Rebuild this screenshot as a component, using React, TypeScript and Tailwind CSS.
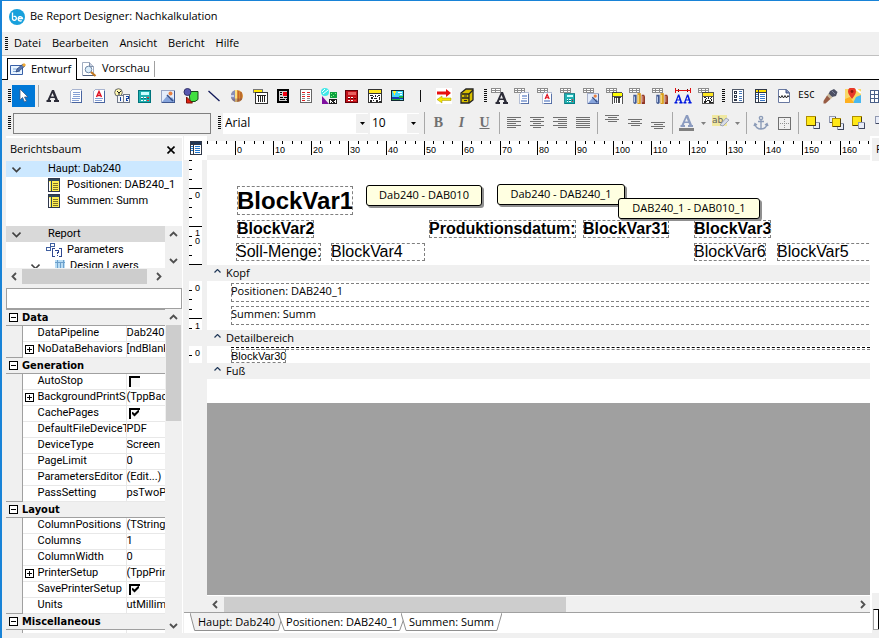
import React, { ReactNode } from "react";

function Icon({ children, w = 16, className = "" }: { children: ReactNode; w?: number; className?: string }) {
  return (
    <svg width={w} height={16} viewBox={`0 0 ${w} 16`} className={`shrink-0 ${className}`} aria-hidden="true">
      {children}
    </svg>
  );
}

const Crisp = ({ children }: { children: ReactNode }) => <g shapeRendering="crispEdges">{children}</g>;

/* ---------- shared icon parts ---------- */
const LetterA = ({ fill = "#2c2c38" }: { fill?: string }) => (
  <path fill={fill} fillRule="evenodd" d="M7 2h2l4 10h1v2H9v-2h1.300l-.700-2H5.500l-.700 2H6v2H1.500v-2h1zM7.500 5 6 8.500h3z" />
);
const Memo = () => (
  <Crisp>
    <path fill="#fff" stroke="#a8b4d0" d="M4.500 1.500h9v13h-11v-11z" />
    <path stroke="#86a0d4" d="M5 4.500h7M5 6.500h7M5 8.500h7M4 10.500h8M4 12.500h7" />
    <path stroke="#4864a0" d="M13.500 3v11.500H4" fill="none" />
  </Crisp>
);
const RichText = () => (
  <>
    <Memo />
    <path fill="#fff" d="M4 2.500h8V10H4z" />
    <path d="m5.500 9 2.500-5.500 2.500 5.500M6.500 7.500h3" stroke="#e01020" strokeWidth="1.400" fill="none" />
  </>
);
const Calc = ({ body = "#20b0b0", edge = "#00747c", lcd = "#c8ffff" }: { body?: string; edge?: string; lcd?: string }) => (
  <Crisp>
    <rect x="1.500" y="2.500" width="12" height="12" fill={body} stroke={edge} />
    <path fill={lcd} d="M4 4h8v3H4z" />
    <path fill="#fff" d="M4 9h2v1H4zM7 9h2v1H7zM4 12h2v1H4zM7 12h2v1H7z" />
    <path fill="#f03030" d="M10 9h2v1h-2zM10 12h2v1h-2z" />
    <path fill={edge} d="M4 10h2v1H4zM7 10h2v1H7zM10 10h2v1h-2z" />
  </Crisp>
);
const Picture = () => (
  <>
    <Crisp>
      <rect x="1.500" y="2.500" width="13" height="12" fill="#e4ecfa" stroke="#98a4c4" />
      <path d="M14.500 3v11.500H2" stroke="#405890" fill="none" />
    </Crisp>
    <path d="m2 14 5-6 3 3 2-2 2 3v2z" fill="#86a4dc" />
    <path d="m7 7 6 6" stroke="#334c86" strokeWidth="1.500" />
    <circle cx="10.500" cy="5.500" r="2" fill="#e88040" />
  </>
);
const Pens = () => (
  <>
    <path d="M1 4h4v9a2 2 0 0 1-4 0z" fill="#405890" />
    <path d="M2 6h1v7H2z" fill="#cfe0ff" />
    <path d="M6 2h4v13H6z" fill="#d89810" />
    <path d="M7 4h1v10H7z" fill="#fff2a0" />
    <path d="M11 4h3l1 2v9h-4z" fill="#8c3020" />
    <path d="M12 5h1v8h-1z" fill="#ffc0a0" />
  </>
);
const Barcode = ({ yellow = true }: { yellow?: boolean }) => (
  <Crisp>
    <rect x="3.500" y="4.500" width="12" height="11" fill="#fff" stroke="#333" />
    {yellow && <path fill="#ff0" stroke="#333" d="M3.500 1.500h12v4h-12z" />}
    <path stroke="#222" d="M6.500 7v7M8.500 7v7M10.500 7v7M12.500 7v7M5 7.500h9" />
  </Crisp>
);
const Qr = () => (
  <Crisp>
    <rect x="1.500" y="1.500" width="13" height="13" fill="#fff" stroke="#333" />
    <path fill="#ffe820" d="M2 2h12v3H2z" />
    <path stroke="#333" d="M2 5.500h12" />
    <path fill="#222" d="M3 7h3v1H3zM8 7h1v2H8zM11 7h2v1h-2zM4 9h2v2H4zM7 10h3v1H7zM12 9h1v3h-1zM3 12h2v2H3zM6 12h1v1H6zM9 12h2v2H9zM6 8h1v1H6zM10 8h1v1h-1zM12 13h2v1h-2z" />
  </Crisp>
);
/* Small grey field grid placed behind the data-aware variants. */
const Db = ({ children }: { children: ReactNode }) => (
  <Icon w={18}>
    <Crisp>
      <path d="M1.500.500h10v4h-10zM1.500 2.500h10M4.500.500v4M8.500.500v4" stroke="#8c8c8c" fill="#fff" />
    </Crisp>
    <g transform="translate(4.500 3.500) scale(.830)">{children}</g>
  </Icon>
);
const ReportTable = ({ accent = "#ffe000", cells = "#3a78c8" }: { accent?: string; cells?: string }) => (
  <Crisp>
    <rect x="2.500" y="1.500" width="11" height="13" fill="#fff" stroke="#303848" />
    <path fill={accent} d="M3 2h10v3H3z" />
    <path stroke="#303848" d="M5.500 2v12M3 4.500h10" />
    <path stroke={cells} d="M7 6.500h5M7 8.500h5M7 10.500h5M7 12.500h5M3 6.500h2M3 8.500h2M3 10.500h2" />
  </Crisp>
);
const YellowTable = () => (
  <Crisp>
    <rect x="2.500" y="1.500" width="11" height="13" fill="#ffef50" stroke="#30384c" />
    <path fill="#30485c" d="M3 2h10v2H3z" />
    <path stroke="#30485c" d="M5.500 2v12" />
    <path stroke="#807428" d="M7 6.500h5M7 8.500h5M7 10.500h5M7 12.500h5" />
    <path stroke="#fff" d="M3.500 5v9" />
  </Crisp>
);

/* ---------- toolbar groups ---------- */
const standardTools: [string, ReactNode][] = [
  ["Label", <Icon><LetterA /></Icon>],
  ["Memo", <Icon><Memo /></Icon>],
  ["RichText", <Icon><RichText /></Icon>],
  ["System variable", (
    <Icon>
      <circle cx="4.500" cy="4.500" r="3.800" fill="#fff8b0" stroke="#666" />
      <path d="M3 3l2 2 2-2M5 5v3" stroke="#222" fill="none" />
      <Crisp>
        <path d="M3.500 7.500h6v7h-6zM9.500 6.500h6v8h-6z" fill="#f4f6fa" stroke="#707888" />
        <path d="M6.500 9v4M12 8.500h2v2h-2v2h2" stroke="#1040a0" fill="none" />
      </Crisp>
    </Icon>
  )],
  ["Variable", <Icon><Calc /></Icon>],
  ["Image", <Icon><Picture /></Icon>],
  ["Shape", (
    <Icon>
      <path d="M6 3.500h9v8l-3 2H7z" fill="#40e040" stroke="#184818" />
      <circle cx="4.500" cy="4" r="3.500" fill="#5858b0" stroke="#303068" />
      <path d="M3.500 9v6h6z" fill="#e02010" stroke="#801008" />
    </Icon>
  )],
  ["Line", <Icon><path d="m2.500 3 11 10" stroke="#101858" strokeWidth="1.300" /></Icon>],
  ["Chart", (
    <Icon>
      <circle cx="8" cy="8" r="6" fill="#d89038" />
      <path d="M6 2.300a6 6 0 0 0 0 11.400z" fill="#8890b8" />
      <path d="M2 8h3" stroke="#c8d0f0" strokeWidth="2" />
      <path d="M7 2v12" stroke="#ffe080" strokeWidth="2" />
      <path d="M9.500 3v10" stroke="#c86828" strokeWidth="1.200" />
      <path d="M12 4v8" stroke="#a04820" strokeWidth="1" />
      <path d="M2.500 10.500a6 6 0 0 0 11 0z" fill="#604050" fillOpacity=".35" />
    </Icon>
  )],
  ["Barcode", (
    <Icon>
      <Crisp><path d="M1.500 1.500h9v3h-9z" fill="#ffe800" stroke="#777" /></Crisp>
      <Barcode yellow={false} />
    </Icon>
  )],
  ["Region", (
    <Icon>
      <Crisp>
        <rect x="3" y="2" width="10" height="12" fill="#d0d0d0" stroke="#000" strokeWidth="2" />
        <path fill="#f00010" d="M8 4h4v4H8z" />
        <path stroke="#000" d="M5 4.500h2M5 6.500h2M5 9.500h3M9 9.500h3M5 11.500h5M11 11.500h1" />
      </Crisp>
    </Icon>
  )],
  ["Subreport", (
    <Icon>
      <Crisp>
        <rect x="2.500" y="1.500" width="11" height="13" fill="#fff" stroke="#666" />
        <path stroke="#e02020" d="M4 4.500h3M9 4.500h3M4 8.500h3M9 8.500h3M4 12.500h3" />
        <path stroke="#888" d="M4 6.500h3M9 6.500h3M4 10.500h3M9 10.500h3M9 12.500h3" />
      </Crisp>
    </Icon>
  )],
  ["Crosstab", (
    <Icon>
      <circle cx="4" cy="4" r="4" fill="#40e8e8" />
      <path d="m1 4 3-3m-2 5 5-4" stroke="#fff" />
      <Crisp>
        <path d="M9 4h7v6H9z" fill="#10a040" />
        <path d="M10 5.500h1M12 7.500h1M14 5.500h1M10 8.500h1" stroke="#80ff80" />
        <path d="M8.500 11.500h7v4h-7z" fill="#fff" stroke="#222" />
        <path d="m10 12 4 3m0-3-4 3" stroke="#222" />
      </Crisp>
      <path d="m1 8 7 8H1z" fill="#8010a0" />
    </Icon>
  )],
  ["Calculator", <Icon><Calc body="#c01018" edge="#600008" lcd="#e86060" /></Icon>],
  ["2D barcode", <Icon><Qr /></Icon>],
  ["Paint box", (
    <Icon>
      <Crisp>
        <rect x="1.500" y="2.500" width="12" height="10" fill="#40d8f8" stroke="#102830" />
        <path fill="#1838b0" d="M2 9h11v2H2z" />
        <path fill="#20b040" d="M2 11h8v1H2zM9 8h4v2H9z" />
        <path fill="#ffee30" d="M3 3h3v2H3zM4 5h1v2H4z" />
        <path fill="#fff" d="M8 4h4v1H8zM10 6h2v1h-2z" />
      </Crisp>
    </Icon>
  )],
  ["Vertical line", <Icon><Crisp><path stroke="#111" strokeWidth="1" d="M7.500 2v12" /></Crisp></Icon>],
  ["Page break", (
    <Icon>
      <path fill="#fff" d="M0 0h16v16H0z" />
      <path fill="#e81010" d="M1 3.500h9V1l5 4-5 4V6.500H1z" />
      <path fill="#f8e800" stroke="#a09000" strokeWidth=".500" d="M15 10H6V8l-5 3.500L6 15v-2.500h9z" />
    </Icon>
  )],
  ["Archive", (
    <Icon>
      <path d="M2 5 7 1h7v11l-4 3H2z" fill="#d8c000" stroke="#222" strokeWidth="1.300" />
      <path d="M3 6h7v9M10 6l4-4M3 10h7" stroke="#222" strokeWidth="1.300" fill="none" />
      <path d="M5 7.500h3v1H5zM5 12h3v1H5z" fill="#222" />
    </Icon>
  )],
];

const dataTools: [string, ReactNode][] = [
  ["DB text", (
    <Icon w={18}>
      <Crisp><path d="M1.500.500h9v4h-9zM1.500 2.500h9M5.500.500v4" stroke="#8c8c8c" fill="#fff" /></Crisp>
      <g transform="translate(4 2)"><LetterA /></g>
    </Icon>
  )],
  ["DB memo", <Db><Memo /></Db>],
  ["DB rich text", <Db><RichText /></Db>],
  ["DB calc", <Db><Calc /></Db>],
  ["DB image", <Db><Picture /></Db>],
  ["DB barcode", <Db><Barcode /></Db>],
  ["DB chart", <Db><Pens /></Db>],
  ["DB chart 2", <Db><Pens /></Db>],
  ["Text fit", (
    <Icon w={18}>
      <Crisp>
        <path d="M1 2.500h15M1.500 0v5M16.500 0v5" stroke="#e01010" />
        <path d="M4 1.500h1M4 3.500h1M13 1.500h1M13 3.500h1" stroke="#600" />
      </Crisp>
      <g transform="translate(-.500 5) scale(.650 .750)"><LetterA fill="#0018e0" /></g>
      <g transform="translate(8.500 5) scale(.650 .750)"><LetterA fill="#0018e0" /></g>
    </Icon>
  )],
  ["DB 2D barcode", <Db><Qr /></Db>],
];

const extraTools: [string, ReactNode][] = [
  ["Form", (
    <Icon>
      <Crisp>
        <rect x="2.500" y="1.500" width="11" height="13" fill="#fff" stroke="#505868" />
        <path d="M4.500 3.500h2v2h-2zM4.500 7.500h2v2h-2zM4.500 11.500h2v1h-2z" fill="#fff" stroke="#303848" />
        <path d="M9 3.500h3M9 5.500h3M9 8.500h3M9 10.500h3M9 12.500h3" stroke="#4878b8" />
      </Crisp>
    </Icon>
  )],
  ["Table", <Icon><ReportTable /></Icon>],
  ["Wave page", (
    <Icon>
      <path d="M2.500 1.500h8l3 3v10h-11z" fill="#fff" stroke="#6878a0" />
      <path d="M10 1.500v3.500h3.500" fill="#8090b8" stroke="#405080" />
      <path d="m3 8 1.500 2L6 7.500 7.500 10 9 7.500l1.500 2.500L12 7.500l1 1.500" stroke="#222" fill="none" />
    </Icon>
  )],
  ["ESC", <span className="font-['DejaVu_Sans_Mono',monospace] text-[9px]">ESC</span>],
  ["Brush", (
    <Icon>
      <path d="m8 3 4-2 3.500 3-1.500 4-4 1-3.500-3z" fill="#4c5064" />
      <path d="m6.500 5.500 4 4-2 1.500-3.500-3.500z" fill="#c8b898" />
      <path d="m5 7.500 3.500 3.500-5 4.500H1.500l0-2.500z" fill="#985c44" />
      <path d="m10 3 3 3" stroke="#8088a0" />
    </Icon>
  )],
  ["Map", (
    <Icon>
      <path d="M0 1h16v14H0z" fill="#f8d868" />
      <path d="m8 15 3-6 5-2v8z" fill="#48b8f0" />
      <path d="m0 11 5-2 4 6H0z" fill="#ffb020" />
      <path d="m11 1 5 4" stroke="#fff" strokeWidth="2" />
      <path d="M7 11C5 8 3 6 3 3.500a4 4 0 0 1 8 0C11 6 9 8 7 11z" fill="#e83828" />
      <circle cx="7" cy="3.500" r="1.400" fill="#901810" />
    </Icon>
  )],
  ["Grid", (
    <Icon>
      <Crisp><path d="M2.500 2.500h12v12h-12zM2.500 6.500h12M2.500 10.500h12M6.500 2.500v12M10.500 2.500v12" stroke="#4a6088" fill="#fff" /></Crisp>
    </Icon>
  )],
];

const Lines = ({ d }: { d: string }) => (
  <Icon><Crisp><path d={d} stroke="#707070" /></Crisp></Icon>
);
const alignTools: [string, ReactNode][] = [
  ["Align left", <Lines d="M1 2.500h14M1 4.500h9M1 6.500h14M1 8.500h9M1 10.500h14M1 12.500h9" />],
  ["Center", <Lines d="M1 2.500h14M4 4.500h8M1 6.500h14M4 8.500h8M1 10.500h14M4 12.500h8" />],
  ["Align right", <Lines d="M1 2.500h14M6 4.500h9M1 6.500h14M6 8.500h9M1 10.500h14M6 12.500h9" />],
  ["Justify", <Lines d="M1 2.500h14M1 4.500h14M1 6.500h14M1 8.500h14M1 10.500h14M1 12.500h14" />],
];
const valignTools: [string, ReactNode][] = [
  ["Top", <Lines d="M1 .500h14M4 2.500h9M1 4.500h14M4 6.500h9" />],
  ["Middle", <Lines d="M1 4.500h14M4 6.500h9M1 8.500h14M4 10.500h9" />],
  ["Bottom", <Lines d="M1 7.500h14M4 9.500h9M1 11.500h14M4 13.500h9" />],
];
const Box = ({ x, y, s, yellow }: { x: number; y: number; s: number; yellow?: boolean }) => (
  <Crisp>
    <rect x={x + 0.5} y={y + 0.5} width={s} height={s} fill={yellow ? "#ffe818" : "#e8ecf8"} stroke={yellow ? "#b09000" : "#9098b0"} />
    <path d={`M${x + s + 0.5} ${y + 1}v${s - 0.5}h-${s}`} stroke={yellow ? "#504010" : "#404860"} fill="none" />
  </Crisp>
);
const orderTools: [string, ReactNode][] = [
  ["Bring to front", <Icon><Box x={8} y={7} s={6} /><Box x={1} y={1} s={9} yellow /></Icon>],
  ["Bring forward", <Icon><Box x={1} y={1} s={6} /><Box x={9} y={8} s={6} /><Box x={4} y={3} s={8} yellow /></Icon>],
  ["Send backward", <Icon><Box x={1} y={1} s={9} yellow /><Box x={7} y={7} s={6} /></Icon>],
  ["Send to back", <Icon><Box x={1} y={1} s={7} /><Box x={6} y={6} s={8} yellow /></Icon>],
];

const Grip = () => (
  <span className="h-[14px] w-[3px] shrink-0 bg-[repeating-linear-gradient(to_bottom,#111_0px,#111_1px,#f0f0f0_1px,#f0f0f0_2px)]" />
);
const Sep = () => <span className="ml-[3px] mr-[2px] h-[22px] w-px shrink-0 bg-[#a8a8a8]" />;
function Tools({ items }: { items: [string, ReactNode][] }) {
  return (
    <>
      {items.map(([name, icon]) => (
        <button key={name} type="button" aria-label={name} className="flex h-[22px] w-[23px] shrink-0 items-center justify-center">
          {icon}
        </button>
      ))}
    </>
  );
}
const Drop = () => (
  <svg width="5" height="3" viewBox="0 0 5 3" className="shrink-0" aria-hidden="true"><path d="M0 0h5L2.500 3z" fill="currentColor" /></svg>
);

function Combo({ label, value, className }: { label: string; value: string; className: string }) {
  return (
    <span className={`relative flex h-[21px] shrink-0 items-center bg-white ${className}`}>
      <select aria-label={label} className="h-full w-full appearance-none bg-transparent pl-[2px] text-xs outline-none">
        <option>{value}</option>
      </select>
      <span className="pointer-events-none absolute inset-y-0 right-0 flex w-[12px] items-center justify-center border-y border-white bg-[#f0f0f0] text-black">
        <Drop />
      </span>
    </span>
  );
}

/* ---------- scroll bars ---------- */
function Arrow({ dir }: { dir: "up" | "down" | "left" | "right" }) {
  const d = { up: "M1 6l3.500-3.500L8 6", down: "M1 3l3.500 3.500L8 3", left: "M6 1L2.500 4.500 6 8", right: "M3 1l3.500 3.500L3 8" }[dir];
  return (
    <button type="button" aria-label={`Scroll ${dir}`} className="flex size-[16px] shrink-0 items-center justify-center">
      <svg width="9" height="9" viewBox="0 0 9 9" aria-hidden="true"><path d={d} stroke="#505050" strokeWidth="1.800" fill="none" /></svg>
    </button>
  );
}

/* ---------- property inspector ---------- */
type Prop = { name: string; value?: string; checked?: boolean; expandable?: boolean };
const groups: { title: string; rows: Prop[] }[] = [
  { title: "Data", rows: [{ name: "DataPipeline", value: "Dab240" }, { name: "NoDataBehaviors", value: "[ndBlank", expandable: true }] },
  {
    title: "Generation",
    rows: [
      { name: "AutoStop", checked: false },
      { name: "BackgroundPrintSe", value: "(TppBac", expandable: true },
      { name: "CachePages", checked: true },
      { name: "DefaultFileDeviceT", value: "PDF" },
      { name: "DeviceType", value: "Screen" },
      { name: "PageLimit", value: "0" },
      { name: "ParametersEditor", value: "(Edit...)" },
      { name: "PassSetting", value: "psTwoPa" },
    ],
  },
  {
    title: "Layout",
    rows: [
      { name: "ColumnPositions", value: "(TString" },
      { name: "Columns", value: "1" },
      { name: "ColumnWidth", value: "0" },
      { name: "PrinterSetup", value: "(TppPrin", expandable: true },
      { name: "SavePrinterSetup", checked: true },
      { name: "Units", value: "utMillime" },
    ],
  },
  { title: "Miscellaneous", rows: [{ name: "" }] },
];

const Expander = ({ plus }: { plus?: boolean }) => (
  <svg width="9" height="9" viewBox="0 0 9 9" shapeRendering="crispEdges" className="block" aria-hidden="true">
    <path d={plus ? "M.5.5h8v8h-8zM2 4.500h5M4.500 2v5" : "M.5.5h8v8h-8zM2 4.500h5"} fill="#fff" stroke="#000" />
  </svg>
);

function Inspector() {
  return (
    <div className="flex min-h-0 flex-1 bg-white">
      <div className="min-w-0 flex-1 overflow-hidden">
        <table className="w-full table-fixed border-collapse">
          <colgroup><col className="w-[16px]" /><col className="w-[104px]" /><col /></colgroup>
          {groups.map((g) => (
            <tbody key={g.title}>
              <tr className="h-[16px] bg-[#f0f0f0]">
                <th colSpan={3} className="border-y border-[#a0a0a0] p-0 text-left">
                  <span className="flex h-[15px] items-center gap-1 pl-[3px] font-['DejaVu_Sans_Condensed','DejaVu_Sans',sans-serif] text-[11px] font-bold leading-[15px]"><Expander />{g.title}</span>
                </th>
              </tr>
              {g.rows.map((r) => (
                <tr key={r.name} className="h-[16px]">
                  <td className="border-r border-[#a0a0a0] bg-[#f0f0f0] p-0" />
                  <td className="border-b border-r border-[#e8e8e8] p-0">
                    <span className="flex h-[15px] items-center overflow-hidden whitespace-nowrap pb-px pl-[2px] leading-[14px]">
                      <span className="w-[13px] shrink-0">{r.expandable && <Expander plus />}</span>{r.name}
                    </span>
                  </td>
                  <td className="border-b border-[#e8e8e8] p-0">
                    {r.checked === undefined ? (
                      <span className="block h-[15px] overflow-hidden whitespace-nowrap leading-[14px]">{r.value}</span>
                    ) : (
                      <span className="relative flex h-[15px] items-center pb-px pl-[2px]">
                        <input type="checkbox" aria-label={r.name} defaultChecked={r.checked} className="peer size-[11px] appearance-none border-l-2 border-t-2 border-black bg-[#f8f8f8]" />
                        <svg width="7" height="7" viewBox="0 0 7 7" className="pointer-events-none absolute left-[5px] top-[4px] hidden peer-checked:block" aria-hidden="true">
                          <path d="M0 2.500 2.500 5 7 .5" stroke="#000" strokeWidth="2" fill="none" />
                        </svg>
                      </span>
                    )}
                  </td>
                </tr>
              ))}
            </tbody>
          ))}
        </table>
      </div>
      <div className="flex w-[17px] shrink-0 flex-col items-center bg-[#f0f0f0]">
        <Arrow dir="up" />
        <div className="h-[96px] w-[15px] bg-[#cdcdcd]" />
        <div className="flex-1" />
        <Arrow dir="down" />
      </div>
    </div>
  );
}

const Chevron = () => (
  <svg width="9" height="7" viewBox="0 0 9 7" className="shrink-0" aria-hidden="true"><path d="m.500 1.500 4 4 4-4" stroke="#404040" strokeWidth="1.600" fill="none" /></svg>
);

function Sidebar() {
  return (
    <aside className="flex w-[176px] shrink-0 flex-col font-['Roboto','Liberation_Sans',sans-serif] text-[11px]">
      <div className="flex h-[23px] shrink-0 items-center justify-between pl-1 pr-[7px] font-['Open_Sans','Noto_Sans',sans-serif]">
        <h2>Berichtsbaum</h2>
        <button type="button" aria-label="Close">
          <svg width="8" height="8" viewBox="0 0 8 8" aria-hidden="true"><path d="m.500.500 7 7m0-7-7 7" stroke="#000" strokeWidth="1.600" /></svg>
        </button>
      </div>
      <ul className="h-[65px] shrink-0 bg-white leading-4">
        <li className="flex h-4 items-center gap-[27px] bg-[#cce8ff] pl-[6px]"><Chevron />Haupt: Dab240</li>
        <li className="flex h-4 items-center gap-[5px] whitespace-nowrap pl-[40px]"><Icon><YellowTable /></Icon>Positionen: DAB240_1</li>
        <li className="flex h-4 items-center gap-[5px] pl-[40px]"><Icon><YellowTable /></Icon>Summen: Summ</li>
      </ul>
      <div className="flex h-[42px] shrink-0 bg-white leading-4">
        <ul className="min-w-0 flex-1 overflow-hidden">
          <li className="flex h-4 items-center gap-[27px] bg-[#d9d9d9] pl-[6px]"><Chevron />Report</li>
          <li className="flex h-4 items-center gap-[5px] pl-[40px]">
            <Icon>
              <Crisp>
                <path d="M4.500 1.500h4v3h-4zM.500 5.500h4v3h-4z" fill="#fff" stroke="#4060a0" />
                <path d="M8.500 6.500h-2v8h2M13 6.500h2v8h-2M9 8.500h3v2h-1v1M11 13h1" stroke="#304890" fill="none" />
              </Crisp>
            </Icon>
            Parameters
          </li>
          <li className="flex h-4 items-center gap-[12px] pl-[25px]"><Chevron />
            <span className="flex items-center gap-[2px]">
              <Icon><Crisp><path d="M3 2h10v12H3z" fill="#b8dcf4" /><path d="M5.500 2v12M8.500 4v10M11.500 2v12M3 4.500h10" stroke="#6ca0cc" /></Crisp></Icon>
              Design Layers
            </span>
          </li>
        </ul>
        <div className="flex w-[17px] shrink-0 flex-col items-center justify-between bg-[#f0f0f0]"><Arrow dir="up" /><Arrow dir="down" /></div>
      </div>
      <div className="mb-[3px] flex h-[17px] shrink-0 items-center bg-[#f0f0f0]">
        <Arrow dir="left" />
        <div className="h-[15px] min-w-0 flex-1 bg-[#cdcdcd]" />
        <div className="ml-[3px] mr-[16px]"><Arrow dir="right" /></div>
      </div>
      <input aria-label="Filter" className="h-[21px] w-full shrink-0 border border-[#a0a0a0] bg-white px-1 outline-none" />
      <Inspector />
    </aside>
  );
}

/* ---------- rulers: 10 mm = 37.8 px, with quarter marks ---------- */
const rulerFont = "Liberation Sans, Arial, sans-serif";
function HorizontalRuler() {
  const step = 37.8;
  return (
    <svg width="100%" height="14" className="block bg-white" shapeRendering="crispEdges" aria-hidden="true">
      {Array.from({ length: 220 }, (_, i) => {
        const x = Math.round(28 + (step / 4) * (i - 3)) + 0.5;
        const major = (i - 3) % 4 === 0;
        return <path key={i} d={`M${x} 0v${major ? 14 : 3}`} stroke="#000" />;
      })}
      {Array.from({ length: 54 }, (_, i) => (
        <text key={i} x={Math.round(30 + step * i)} y="12" fontSize="9" fontFamily={rulerFont}>{i * 10}</text>
      ))}
    </svg>
  );
}
function VerticalRuler({ height, first, majors, labels }: { height: number; first: number; majors: number[]; labels: [string, number][] }) {
  const marks = Array.from({ length: 12 }, (_, i) => Math.round(first + i * 9.45)).filter((y) => y < height);
  return (
    <svg width="13" height={height} className="mx-[5px] block shrink-0 bg-white" shapeRendering="crispEdges" aria-hidden="true">
      {marks.map((y, i) => <path key={y} d={`M0 ${y + 0.5}h${majors.includes(i) ? 13 : 3}`} stroke="#000" />)}
      {labels.map(([t, y]) => <text key={y} x="6" y={y} fontSize="9" fontFamily={rulerFont}>{t}</text>)}
    </svg>
  );
}

function Band({ name, height, ruler, children }: { name: string; height: string; ruler: ReactNode; children?: ReactNode }) {
  return (
    <section>
      <div className={`flex ${height}`}>
        {ruler}
        <div className="relative min-w-0 flex-1 overflow-hidden bg-white">{children}</div>
      </div>
      <div className="flex h-4 items-center gap-[5px] pl-[30px] leading-4">
        <svg width="7" height="4" viewBox="0 0 7 4" className="mb-1" aria-hidden="true"><path d="m.500 3.500 3-3 3 3" stroke="#203858" strokeWidth="1.200" fill="none" /></svg>
        {name}
      </div>
    </section>
  );
}

const field = "absolute whitespace-nowrap outline-1 outline-dashed -outline-offset-1 outline-[#808080]";
const arial = "h-[18px] font-['Liberation_Sans',Arial,sans-serif] text-base leading-[18px]";
const note = "absolute flex h-[21px] items-center justify-center whitespace-nowrap rounded-[3px] border border-black bg-[#ffffe1] shadow-[2px_2px_0_#909090]";

function SheetTab({ text, active }: { text: string; active?: boolean }) {
  return (
    <button type="button" role="tab" aria-selected={!!active} className="relative -ml-[5px] flex h-[18px] shrink-0 items-center px-[8px]">
      <svg className="absolute inset-0 h-full w-full" viewBox="0 0 100 18" preserveAspectRatio="none" aria-hidden="true">
        <path d="M0 0 5 17.500H95L100 0" fill={active ? "#f0f0f0" : "#fff"} stroke="#909090" vectorEffect="non-scaling-stroke" />
      </svg>
      <span className="relative">{text}</span>
    </button>
  );
}

function Designer() {
  return (
    <main className="flex min-w-0 flex-1 flex-col overflow-hidden">
      <div className="flex h-[24px] shrink-0">
        <div className="flex w-[23px] shrink-0 items-center justify-center bg-white"><Icon><ReportTable accent="#203858" cells="#2078d0" /></Icon></div>
        <div className="min-w-0 flex-1 pt-[5px]"><HorizontalRuler /></div>
      </div>
      <Band name="Kopf" height="h-[105px]" ruler={<VerticalRuler height={105} first={0} majors={[3, 7, 11]} labels={[["0", 38], ["1", 76], ["0", 84]]} />}>
        <div className={`${field} left-[30px] top-[26px] h-[29px] font-['Liberation_Sans',Arial,sans-serif] text-2xl font-bold leading-[29px]`}>BlockVar1</div>
        <div className={`${field} ${arial} left-[30px] top-[60px] font-bold`}>BlockVar2</div>
        <div className={`${field} ${arial} left-[222px] top-[60px] font-bold`}>Produktionsdatum:</div>
        <div className={`${field} ${arial} left-[376px] top-[60px] font-bold`}>BlockVar31</div>
        <div className={`${field} ${arial} left-[487px] top-[60px] font-bold`}>BlockVar3</div>
        <div className={`${field} ${arial} left-[29px] top-[83px]`}>Soll-Menge:</div>
        <div className={`${field} ${arial} left-[124px] top-[83px] w-[94px]`}>BlockVar4</div>
        <div className={`${field} ${arial} left-[487px] top-[83px]`}>BlockVar6</div>
        <div className={`${field} ${arial} -right-1 left-[570px] top-[83px]`}>BlockVar5</div>
        <div className={`${note} left-[159px] top-[25px] w-[116px]`}>Dab240 - DAB010</div>
        <div className={`${note} left-[290px] top-[24px] w-[128px]`}>Dab240 - DAB240_1</div>
        <div className={`${note} left-[411px] top-[38px] w-[142px]`}>DAB240_1 - DAB010_1</div>
      </Band>
      <Band name="Detailbereich" height="h-[49px]" ruler={<VerticalRuler height={49} first={9} majors={[3]} labels={[["0", 10], ["1", 48]]} />}>
        <div className={`${field} -right-1 left-[24px] top-[2px] h-[19px] leading-4`}>Positionen: DAB240_1</div>
        <div className={`${field} -right-1 left-[24px] top-[25px] h-[19px] leading-4`}>Summen: Summ</div>
      </Band>
      <Band name="Fuß" height="h-[17px]" ruler={<VerticalRuler height={17} first={9} majors={[]} labels={[["0", 10]]} />}>
        <div className="absolute left-[24px] right-0 top-px border-t border-dashed border-black" />
        <div className="absolute left-[24px] right-0 top-[3px] border-t border-dashed border-[#808080]" />
        <div className={`${field} left-[24px] top-[3px] h-[14px] font-['Liberation_Sans',Arial,sans-serif] leading-[14px]`}>BlockVar30</div>
      </Band>
      <div className="ml-[23px] h-[24px] shrink-0 bg-white" />
      <div className="ml-[23px] min-h-0 flex-1 bg-[#a0a0a0]" />
      <div className="ml-[23px] flex h-[17px] shrink-0 items-end border-t border-white">
        <Arrow dir="left" />
        <div className="ml-px h-[15px] w-[342px] bg-[#cdcdcd]" />
        <div className="flex-1" />
        <Arrow dir="right" />
      </div>
      <div role="tablist" className="flex h-[21px] shrink-0 border-t border-[#a0a0a0] bg-white pl-[11px]">
        <SheetTab text="Haupt: Dab240" active />
        <SheetTab text="Positionen: DAB240_1" />
        <SheetTab text="Summen: Summ" />
      </div>
    </main>
  );
}

export default function App() {
  return (
    <div className="flex h-screen flex-col overflow-hidden border-l-2 border-t border-[#1883d7] bg-[#f0f0f0] pb-[5px] font-['Open_Sans','Noto_Sans',sans-serif] text-[11px] text-black">
      <header className="flex h-[31px] shrink-0 items-center gap-[5px] bg-white pl-[7px]">
        <svg width="16" height="16" viewBox="0 0 16 16" aria-hidden="true">
          <circle cx="8" cy="8" r="8" fill="#18a0dc" />
          <path d="M3.500 3.500v6.500a2 2 0 1 0 1-2.500M9 9.500h4.500a2.200 2.200 0 1 0-.800 2" stroke="#fff" strokeWidth="1.300" fill="none" />
        </svg>
        <h1>Be Report Designer: Nachkalkulation</h1>
      </header>
      <nav className="flex h-[23px] shrink-0 items-center pl-[3px]">
        <Grip />
        <div className="flex gap-[11px] pl-[6px]">
          {["Datei", "Bearbeiten", "Ansicht", "Bericht", "Hilfe"].map((m) => <button key={m} type="button">{m}</button>)}
        </div>
      </nav>
      <div role="tablist" className="flex h-[25px] shrink-0 items-end border-t border-[#c0c0c0] bg-white">
        <span className="h-px w-[5px] bg-black" />
        <button type="button" role="tab" aria-selected="true" className="flex h-[22px] w-[70px] items-center gap-[5px] border-x border-t border-black pl-[2px]">
          <Icon>
            <path d="M.500 3.500h12v9H.500z" fill="#e8f4ff" stroke="#3860a8" />
            <path d="M3 7h5M3 9.500h7" stroke="#80a8d8" />
            <path d="m6 10 1-3 6-5 2 2-6 5z" fill="#5878b0" stroke="#283c70" strokeWidth=".700" />
            <path d="m12 3 2-2 2 2-2 2z" fill="#f0a830" />
          </Icon>
          Entwurf
        </button>
        <div className="flex h-[22px] flex-1 items-center border-b border-black">
          <button type="button" role="tab" aria-selected="false" className="flex items-center gap-[5px] pl-[4px]">
            <Icon>
              <path d="M1.500 1.500h7l4 4v9h-11z" fill="#fff" stroke="#a0acc0" />
              <path d="M8.500 1.500v4h4" fill="#c8d0e0" stroke="#8090a8" />
              <circle cx="7.500" cy="8.500" r="3.300" fill="#dceefa" stroke="#7088a8" />
              <path d="M2 14.500h11" stroke="#506080" />
              <path d="m10 11 4.500 4" stroke="#c07820" strokeWidth="2.200" />
            </Icon>
            Vorschau
          </button>
          <span className="ml-[4px] h-4 w-px bg-[#a0a0a0]" />
        </div>
      </div>
      <div className="flex h-[32px] shrink-0 items-center overflow-hidden pl-[6px]">
        <Grip />
        <button type="button" aria-label="Select" className="ml-px flex h-[22px] w-[23px] shrink-0 items-center justify-center bg-[#0078d7]">
          <Icon><path d="M4 1v11l2.500-2.500L8.500 14l2-1-2-4H12z" fill="#fff" stroke="#405880" strokeWidth=".800" /></Icon>
        </button>
        <Sep />
        <Tools items={standardTools} />
        <span className="w-[6px] shrink-0" />
        <Grip />
        <Tools items={dataTools} />
        <span className="w-[5px] shrink-0" />
        <Grip />
        <span className="w-px shrink-0" />
        <Tools items={extraTools} />
      </div>
      <div className="flex h-[22px] shrink-0 items-center overflow-hidden pl-[6px]">
        <Grip />
        <select aria-label="Component" className="ml-[2px] h-[21px] w-[198px] shrink-0 appearance-none border border-[#808080] bg-[#f0f0f0]"><option></option></select>
        <span className="w-[7px] shrink-0" />
        <Grip />
        <span className="w-[2px] shrink-0" />
        <Combo label="Font" value="Arial" className="w-[145px]" />
        <span className="w-[2px] shrink-0" />
        <Combo label="Font size" value="10" className="w-[49px]" />
        <span className="w-[2px] shrink-0" />
        <Sep />
        <button type="button" className="w-[23px] shrink-0 font-['Liberation_Serif',serif] text-sm font-bold text-[#707070]">B</button>
        <button type="button" className="w-[23px] shrink-0 font-['Liberation_Serif',serif] text-sm font-bold italic text-[#707070]">I</button>
        <button type="button" className="w-[23px] shrink-0 font-['Liberation_Serif',serif] text-sm font-bold text-[#707070] underline">U</button>
        <Sep />
        <Tools items={alignTools} />
        <Sep />
        <Tools items={valignTools} />
        <Sep />
        <Tools items={[["Font color", <Icon><g transform="translate(0 -2)"><LetterA fill="#8c9cc0" /></g><path d="M0 13h15v3H0z" fill="#808080" /></Icon>]]} />
        <span className="mx-[3px] text-[#808080]"><Drop /></span>
        <Tools items={[["Highlight", (
          <Icon w={18}>
            <path d="M0 0h15v11H0z" fill="#f0e8a0" />
            <text x="0" y="8" fontSize="9" fontFamily="DejaVu Sans, sans-serif" fill="#606060">ab</text>
            <path d="m8 10 6-7 3 2-6 6z" fill="#d8dce8" stroke="#9098b0" strokeWidth=".800" />
          </Icon>
        )]]} />
        <span className="mx-[3px] text-[#808080]"><Drop /></span>
        <Sep />
        <Tools items={[
          ["Anchor", (
            <Icon><g stroke="#8c9cb8" strokeWidth="1.400" fill="none"><circle cx="8" cy="3" r="1.600" /><path d="M8 5v9M5 6.500h6M2 9c0 3 3 5 6 5s6-2 6-5M1 11l1-2.500L4 10M15 11l-1-2.500L12 10" /></g></Icon>
          )],
          ["Border", (
            <Icon><Crisp><path d="M2.500 2.500h12v12h-12z" stroke="#707070" fill="none" /><path d="M8.500 4v9M4 8.500h9" stroke="#909090" strokeDasharray="1 1" /></Crisp></Icon>
          )],
        ]} />
        <Sep />
        <Tools items={orderTools} />
      </div>
      <div className="flex min-h-0 flex-1 pl-[4px] pt-[2px]">
        <div className="flex border-t-2 border-white"><Sidebar /></div>
        <div className="w-[2px] shrink-0 border-l border-white" />
        <Designer />
        <aside className="flex w-[9px] shrink-0 flex-col overflow-hidden border-l-2 border-t-2 border-white">
          <div className="h-[23px] shrink-0 whitespace-nowrap pl-[4px] leading-[22px]">F</div>
          <div className="min-h-0 flex-1 bg-white" />
          <div className="flex h-[16px] shrink-0 items-center pl-[3px]"><Arrow dir="left" /></div>
          <div className="mb-[3px] ml-px h-[21px] shrink-0 border-y border-l border-t-black border-b-[#a0a0a0] border-l-[#a0a0a0] bg-white pl-[4px]">
            <div className="h-full w-px bg-black" />
          </div>
        </aside>
      </div>
    </div>
  );
}
